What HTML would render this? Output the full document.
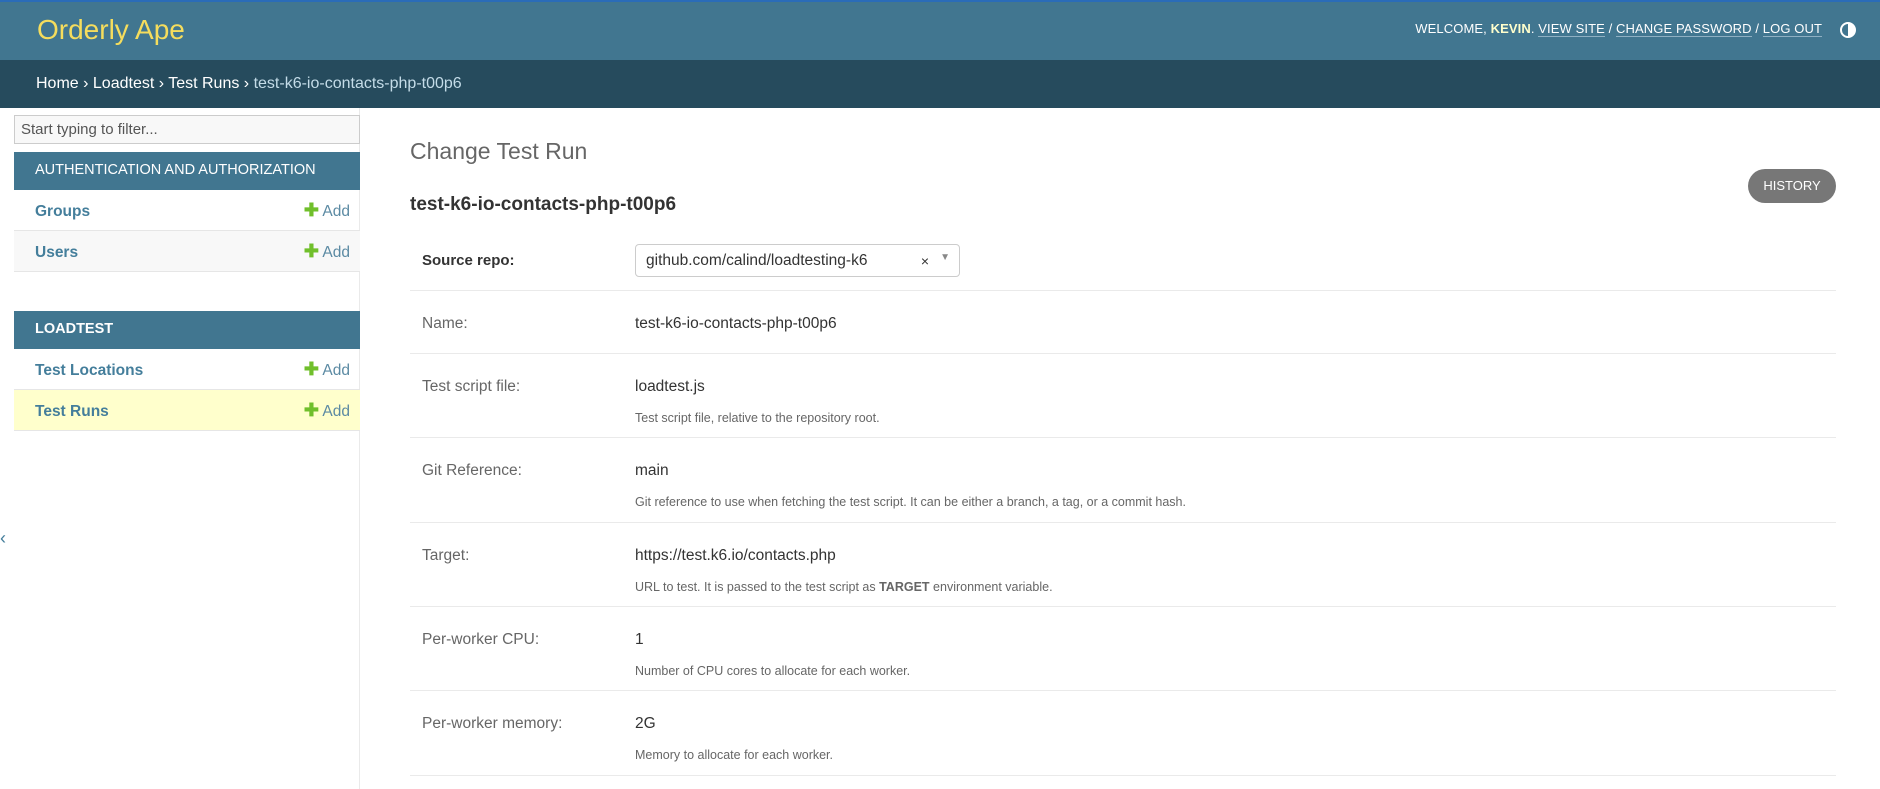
<!DOCTYPE html>
<html><head><meta charset="utf-8"><style>
*{box-sizing:border-box;margin:0;padding:0}
body{width:1880px;height:789px;overflow:hidden;background:#fff;font-family:"Liberation Sans",sans-serif;color:#333;position:relative}
#hdr{position:absolute;left:0;top:0;width:1880px;height:60px;background:#417690;border-top:2px solid #2a6cb8}
#brand{position:absolute;left:37px;top:12px;font-size:28px;color:#f5dd5d;font-weight:300}
#tools{position:absolute;right:58px;top:19px;font-size:13px;color:#fff;letter-spacing:0.1px}
#tools b{color:#ffc}
#tools u{text-decoration:none;border-bottom:1px solid #8fb0c3}
#theme{position:absolute;right:24px;top:20px;width:16px;height:16px;border-radius:50%;border:2px solid #fff;background:linear-gradient(90deg,#417690 50%,#fff 50%)}
#bc{position:absolute;left:0;top:60px;width:1880px;height:48px;background:#264b5d;color:#fff;font-size:16px;padding:15px 36px}
#bc span{color:#c4dce8}
#side{position:absolute;left:0;top:108px;width:360px;height:681px;border-right:1px solid #eaeaea}
#filter{position:absolute;left:14px;top:7px;width:346px;height:29px;border:1px solid #ccc;background:#f8f8f8;font-size:15px;color:#555;padding:5px 6px}
.cap{position:absolute;left:14px;width:346px;height:38px;background:#417690;color:#fff;font-size:14.5px;padding:10px 21px}
.row{position:absolute;left:14px;width:346px;height:41px;border-bottom:1px solid #e6e6e6;font-size:15.5px;color:#447e9b;font-weight:bold;padding:13px 21px}
.row i{position:absolute;right:10px;top:10px;font-style:normal;font-weight:normal;color:#5b8aa3}
.row i b{color:#70bf2b;font-size:18px}
#arrow{position:absolute;left:0;top:528px;font-size:18px;color:#447e9b}
h1{position:absolute;left:410px;top:138px;font-size:23px;font-weight:300;color:#666}
h2{position:absolute;left:410px;top:194px;font-size:19px;font-weight:bold;color:#333}
#hist{position:absolute;left:1748px;top:169px;width:88px;height:34px;border-radius:17px;background:#777;color:#fff;font-size:13px;text-align:center;line-height:34px}
.f{position:absolute;left:410px;width:1426px;border-bottom:1px solid #eaeaea}
.f .l{position:absolute;left:12px;font-size:15.5px;color:#666}
.f .v{position:absolute;left:225px;font-size:15.5px;color:#333}
.f .h{position:absolute;left:225px;font-size:12.5px;color:#666}
#sel{position:absolute;left:225px;top:4px;width:325px;height:33px;border:1px solid #ccc;border-radius:4px;font-size:15.5px;padding:7px 10px}
</style></head><body>
<div id="hdr"><div id="brand">Orderly Ape</div>
<div id="tools">WELCOME, <b>KEVIN</b>. <u>VIEW SITE</u> / <u>CHANGE PASSWORD</u> / <u>LOG OUT</u></div><div id="theme"></div></div>
<div id="bc">Home › Loadtest › Test Runs › <span>test-k6-io-contacts-php-t00p6</span></div>
<div id="side">
<div id="filter">Start typing to filter...</div>
<div class="cap" style="top:44px">AUTHENTICATION AND AUTHORIZATION</div>
<div class="row" style="top:82px">Groups<i><b>✚</b> Add</i></div>
<div class="row" style="top:123px;background:#f8f8f8">Users<i><b>✚</b> Add</i></div>
<div class="cap" style="top:203px;font-weight:bold">LOADTEST</div>
<div class="row" style="top:241px">Test Locations<i><b>✚</b> Add</i></div>
<div class="row" style="top:282px;background:#ffc">Test Runs<i><b>✚</b> Add</i></div>
</div>
<div id="arrow">‹</div>
<h1>Change Test Run</h1>
<h2>test-k6-io-contacts-php-t00p6</h2>
<div id="hist">HISTORY</div>
<div class="f" style="top:240px;height:51px"><div class="l" style="top:12px;color:#333;font-weight:bold;font-size:15px">Source repo:</div><div id="sel">github.com/calind/loadtesting-k6<span style="position:absolute;right:30px;top:8px;font-size:14px">×</span><span style="position:absolute;right:9px;top:7px;color:#888;font-size:10px">▼</span></div></div>
<div class="f" style="top:291px;height:63px"><div class="l" style="top:24px">Name:</div><div class="v" style="top:24px">test-k6-io-contacts-php-t00p6</div></div>
<div class="f" style="top:354px;height:84px"><div class="l" style="top:24px">Test script file:</div><div class="v" style="top:24px">loadtest.js</div><div class="h" style="top:57px">Test script file, relative to the repository root.</div></div>
<div class="f" style="top:438px;height:85px"><div class="l" style="top:24px">Git Reference:</div><div class="v" style="top:24px">main</div><div class="h" style="top:57px">Git reference to use when fetching the test script. It can be either a branch, a tag, or a commit hash.</div></div>
<div class="f" style="top:523px;height:84px"><div class="l" style="top:24px">Target:</div><div class="v" style="top:24px">https://test.k6.io/contacts.php</div><div class="h" style="top:57px">URL to test. It is passed to the test script as <b>TARGET</b> environment variable.</div></div>
<div class="f" style="top:607px;height:84px"><div class="l" style="top:24px">Per-worker CPU:</div><div class="v" style="top:24px">1</div><div class="h" style="top:57px">Number of CPU cores to allocate for each worker.</div></div>
<div class="f" style="top:691px;height:85px"><div class="l" style="top:24px">Per-worker memory:</div><div class="v" style="top:24px">2G</div><div class="h" style="top:57px">Memory to allocate for each worker.</div></div>
</body></html>
